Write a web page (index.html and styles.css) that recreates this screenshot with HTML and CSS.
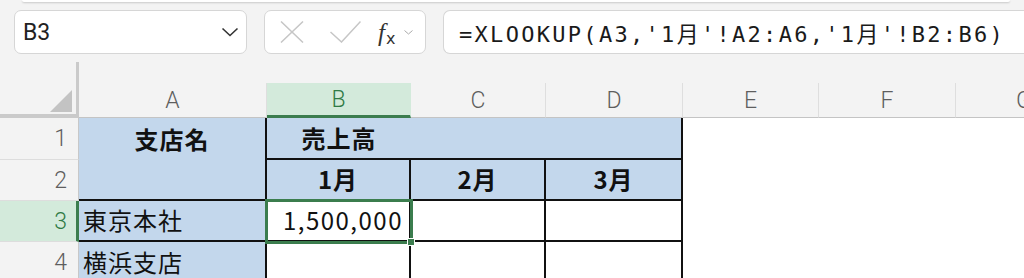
FILE: index.html
```html
<!DOCTYPE html>
<html lang="ja">
<head>
    <meta charset="UTF-8">
    <meta name="viewport" content="width=device-width, initial-scale=1.0">
    <title>XLOOKUP - Sheet</title>
    <link rel="stylesheet" href="styles.css">
</head>
<body>
    <div class="ribbon-edge"></div>

    <div class="formula-bar">
        <div class="name-box">
            <span class="cell-ref">B3</span>
            <svg class="chev" width="18" height="10" viewBox="0 0 18 10"><path d="M1.5 1.5 L9 8.5 L16.5 1.5" fill="none" stroke="#333" stroke-width="1.6"/></svg>
        </div>
        <div class="fx-buttons">
            <svg class="icon-x" width="24" height="22" viewBox="0 0 24 22"><path d="M1 0.5 L23 21.5 M23 0.5 L1 21.5" fill="none" stroke="#c6c6c6" stroke-width="1.5"/></svg>
            <svg class="icon-check" width="31" height="22" viewBox="0 0 31 22"><path d="M0.5 11 L11.5 21 L30.5 0.5" fill="none" stroke="#c6c6c6" stroke-width="1.5"/></svg>
            <span class="fx"><i>f</i><span class="fx-sub">x</span></span>
            <svg class="chev-small" width="9" height="5" viewBox="0 0 9 5"><path d="M0.5 0.5 L4.5 4 L8.5 0.5" fill="none" stroke="#aaa" stroke-width="1"/></svg>
        </div>
        <div class="formula-input">=XLOOKUP(A3,'1月'!A2:A6,'1月'!B2:B6)</div>
    </div>

    <div class="sheet">
        <div class="corner"><svg width="22" height="22" viewBox="0 0 22 22"><path d="M22 0 L22 22 L0 22 Z" fill="#c3c3c3"/></svg></div>
        <div class="col-gap"></div>

        <div class="col-head">A</div>
        <div class="col-head active">B</div>
        <div class="col-head">C</div>
        <div class="col-head">D</div>
        <div class="col-head">E</div>
        <div class="col-head">F</div>
        <div class="col-head last">G</div>

        <div class="row-head">1</div>
        <div class="cell blue bold center br">支店名</div>
        <div class="cell blue bold center bb">売上高</div>
        <div class="cell blue bb"></div>
        <div class="cell blue bb br"></div>
        <div class="cell off"></div>

        <div class="row-head">2</div>
        <div class="cell blue br bb"></div>
        <div class="cell blue bold center br bb">1月</div>
        <div class="cell blue bold center br bb">2月</div>
        <div class="cell blue bold center br bb">3月</div>
        <div class="cell off"></div>

        <div class="row-head active">3</div>
        <div class="cell blue br bb">東京本社</div>
        <div class="cell right br bb selected">1,500,000</div>
        <div class="cell br bb"></div>
        <div class="cell br bb"></div>
        <div class="cell off"></div>

        <div class="row-head">4</div>
        <div class="cell blue br">横浜支店</div>
        <div class="cell br"></div>
        <div class="cell br"></div>
        <div class="cell br"></div>
        <div class="cell off"></div>
    </div>
</body>
</html>
```

FILE: styles.css
```css
body {
    margin: 0;
    padding: 0;
    background-color: #f3f3f3;
    font-family: "Noto Sans CJK JP", "Noto Sans", sans-serif;
    color: #111;
    width: 1024px;
    height: 278px;
    overflow: hidden;
}
.ribbon-edge {
    height: 2px;
    margin: 0 14px 0 22px;
    background: #fff;
    border-radius: 0 0 8px 8px;
    box-shadow: 0 1px 2px rgba(0, 0, 0, 0.18);
}
.formula-bar {
    display: flex;
    align-items: stretch;
    height: 44px;
    margin-top: 8px;
    padding-left: 14px;
}
.name-box {
    width: 233px;
    box-sizing: border-box;
    background: #fff;
    border: 1px solid #d6d6d6;
    border-radius: 7px;
    display: flex;
    align-items: center;
    justify-content: space-between;
    padding: 0 7px 0 8px;
}
.cell-ref {
    font-family: Roboto, "Noto Sans", sans-serif;
    font-size: 23px;
    color: #222;
}
.fx-buttons {
    width: 162px;
    box-sizing: border-box;
    margin-left: 17px;
    background: #fff;
    border: 1px solid #d6d6d6;
    border-radius: 7px;
    display: flex;
    align-items: center;
    padding: 0 0 0 15px;
}
.icon-x {
    margin-right: 26px;
}
.icon-check {
    margin-right: 17px;
}
.fx {
    font-family: "Liberation Serif", serif;
    font-size: 25px;
    color: #333;
    display: flex;
    align-items: baseline;
    line-height: 1;
}
.fx-sub {
    font-family: "DejaVu Sans", sans-serif;
    font-size: 16px;
    margin-left: 1px;
    position: relative;
    top: 3px;
}
.chev-small {
    margin-left: 9px;
}
.formula-input {
    flex: 1;
    margin-left: 17px;
    background: #fff;
    border: 1px solid #d6d6d6;
    border-right: none;
    border-radius: 7px 0 0 7px;
    display: flex;
    align-items: center;
    padding-left: 15px;
    font-family: "DejaVu Sans Mono", "Noto Sans CJK JP", monospace;
    font-size: 22px;
    letter-spacing: 2.3px;
    color: #1a1a1a;
}
.sheet {
    display: grid;
    grid-template-columns: 79px 188px 144px 135px 137px 136px 137px 68px;
    grid-template-rows: 21px 35px 42px 41px 41px 41px;
    margin-top: 8px;
    background: #fff;
}
.corner {
    grid-row: span 2;
    background: #f3f3f3;
    box-sizing: border-box;
    border-right: 3px solid #cacaca;
    border-bottom: 4px solid #cacaca;
    display: flex;
    align-items: flex-end;
    justify-content: flex-end;
    padding: 0 4px 2px 0;
}
.col-gap {
    grid-column: span 7;
    background: #f3f3f3;
}
.col-head {
    background: #f3f3f3;
    box-sizing: border-box;
    border-right: 1px solid #dedede;
    border-bottom: 1px solid #c4c4c4;
    display: flex;
    align-items: center;
    justify-content: center;
    font-family: Roboto, "Noto Sans", sans-serif;
    font-weight: 300;
    font-size: 23px;
    color: #5e5e5e;
}
.col-head.active {
    background: #d3eadb;
    color: #2f7a45;
    border-bottom: 3px solid #3b7d4e;
    border-right-color: #d3eadb;
}
.col-head.last {
    justify-content: flex-start;
    padding-left: 60px;
    border-right: none;
}
.row-head {
    background: #f3f3f3;
    box-sizing: border-box;
    border-right: 1px solid #c8c8c8;
    border-bottom: 1px solid #dddddd;
    display: flex;
    align-items: center;
    justify-content: flex-end;
    padding-right: 11px;
    font-family: Roboto, "Noto Sans", sans-serif;
    font-weight: 300;
    font-size: 23px;
    color: #5e5e5e;
}
.row-head.active {
    background: #d3eadb;
    color: #2f7a45;
    border-right: 3px solid #3b7d4e;
    padding-right: 9px;
}
.cell {
    box-sizing: border-box;
    display: flex;
    align-items: center;
    padding: 0 4px 2px;
    font-size: 24px;
    letter-spacing: 1px;
    background: #fff;
}
.cell.off {
    grid-column: span 3;
}
.blue {
    background: #c3d7ec;
}
.bold {
    font-weight: 700;
}
.center {
    justify-content: center;
}
.right {
    justify-content: flex-end;
    padding-right: 6px;
    letter-spacing: 1.5px;
}
.br {
    border-right: 2px solid #111;
}
.bb {
    border-bottom: 2px solid #111;
}
.selected {
    position: relative;
    outline: 3px solid #3b7d4e;
    outline-offset: -1px;
    z-index: 1;
}
.selected::after {
    content: "";
    position: absolute;
    right: -6px;
    bottom: -6px;
    width: 6px;
    height: 6px;
    background: #3b7d4e;
    border: 1px solid #fff;
}
```
